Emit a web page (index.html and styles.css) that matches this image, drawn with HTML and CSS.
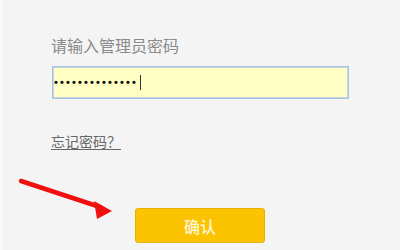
FILE: index.html
```html
<!DOCTYPE html>
<html lang="zh-CN">
<head>
<meta charset="utf-8">
<link rel="stylesheet" href="styles.css">
</head>
<body>
<div class="page">
  <div class="label">请输入管理员密码</div>
  <div class="input"><span class="dots">••••••••••••••</span><span class="caret"></span></div>
  <a class="forgot" href="#">忘记密码？</a>
  <div class="actions"><button class="confirm">确认</button></div>
  <svg class="arrow" width="120" height="50" viewBox="0 0 120 50">
    <line x1="21" y1="11" x2="100" y2="37" stroke="#f01010" stroke-width="4.5" stroke-linecap="round"/>
    <polygon points="112,41 94,31 97,49" fill="#f01010"/>
  </svg>
</div>
</body>
</html>
```
FILE: styles.css
```css
html, body {
  margin: 0;
  padding: 0;
  background: #f4f4f5;
}
.page {
  position: relative;
  width: 400px;
  height: 250px;
  box-sizing: border-box;
  padding: 34px 0 0 51px;
  border-left: 2px solid #fbfbfb;
  font-family: "Noto Sans CJK SC", "Noto Sans", sans-serif;
}
.page > * { margin-left: -2px; }
.label {
  font-size: 16px;
  line-height: 22px;
  color: #8a8a8a;
}
.input {
  margin-top: 10px;
  margin-left: -1px;
  width: 297px;
  height: 33px;
  box-sizing: border-box;
  border: 1px solid #a6c3e3;
  box-shadow: inset 0 0 0 1px #c9d6e2;
  background: #ffffc4;
  display: flex;
  align-items: center;
  padding-left: 1px;
}
.dots {
  font-family: "Liberation Sans", sans-serif;
  font-size: 11px;
  font-weight: bold;
  letter-spacing: 2.15px;
  color: #111;
  line-height: 1;
}
.caret {
  display: block;
  width: 1px;
  height: 15px;
  background: #333;
  margin-left: 2px;
}
.forgot {
  display: inline-block;
  margin-top: 32px;
  font-size: 14px;
  line-height: 20px;
  color: #666;
  text-decoration: underline;
  text-underline-offset: 2px;
}
.actions {
  margin-top: 56px;
  padding-left: 84px;
}
.confirm {
  display: block;
  width: 130px;
  height: 35px;
  box-sizing: border-box;
  border: 1px solid #e6b400;
  border-radius: 3px;
  background: #fcc300;
  color: #fff6d6;
  font-family: "Noto Sans CJK SC", "Noto Sans", sans-serif;
  font-size: 16px;
  font-weight: 500;
  padding: 0;
}
.arrow {
  position: absolute;
  left: -2px;
  top: 170px;
  margin-left: 0;
}
```
